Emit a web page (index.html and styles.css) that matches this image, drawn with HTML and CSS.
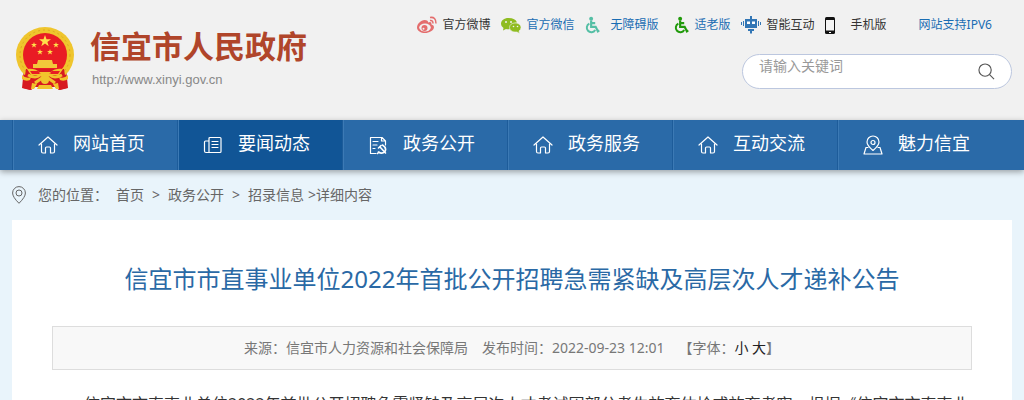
FILE: index.html
```html
<!DOCTYPE html>
<html lang="zh-CN">
<head>
    <meta charset="UTF-8">
    <meta name="viewport" content="width=device-width, initial-scale=1.0">
    <title>信宜市市直事业单位2022年首批公开招聘急需紧缺及高层次人才递补公告</title>
    <link rel="stylesheet" href="styles.css">
</head>
<body>

<svg class="symbols" aria-hidden="true">
    <symbol id="home" viewBox="0 0 20 20">
        <path d="M1 10 10 2l9 8M3.500 9v7.500q0 1.500 1.500 1.500h2.500v-5q0-1 1-1h3q1 0 1 1v5H15q1.500 0 1.500-1.500V9"/>
    </symbol>
    <symbol id="news" viewBox="0 0 20 20">
        <path d="M6 17.500V3.500q0-1 1-1h10q1 0 1 1v13q0 1-1 1H3q-1.500 0-1.500-1.500V7q0-1 1-1H6M9 6.500h6M9 9.500h6M9 12.500h6"/>
    </symbol>
    <symbol id="party" viewBox="0 0 20 20">
        <path d="M8 18.500H2.500v-16H14l3.500 3.500v4M13.500 2.500V6h4M5 6.500h5M5 10h4M5 13.500h2"/>
        <path d="M14.500 10q4.500 3 2.500 6.500-3 3-6.500.5M9.500 18.500l1.500-1.500M10.500 13l2.500-2.500M12 12l5.500 6" stroke-width="1.600"/>
    </symbol>
    <symbol id="wheelchair" viewBox="0 0 16 20">
        <circle cx="6.500" cy="3" r="2.200" fill="currentColor"/>
        <path d="M6.500 5v7h5l2.500 5 1.500-1M6.500 8h4.500" fill="none" stroke="currentColor" stroke-width="2.400"/>
        <path d="M4.500 8.500a5 5 0 1 0 6.500 7" fill="none" stroke="currentColor" stroke-width="2.200"/>
    </symbol>
</svg>

<header class="header">
    <div class="wrap header-inner">
        <a class="logo" href="#">
            <svg class="emblem" viewBox="0 0 60 64" aria-hidden="true">
                <path d="M9 42 7 62l8 2 5-3h20l5 3 8-2-2-20z" fill="#d71920"/>
                <ellipse cx="30" cy="29" rx="29" ry="28" fill="#efc52d"/>
                <circle cx="30" cy="29" r="25" fill="none" stroke="#dca820" stroke-dasharray="2 3"/>
                <circle cx="30" cy="29" r="22" fill="#e91c24"/>
                <g fill="#ffe04a">
                    <path d="m30 9 1.500 4.200h4.500l-3.600 2.700 1.300 4.300-3.700-2.600-3.700 2.600 1.300-4.300-3.600-2.700h4.500z"/>
                    <path d="m19 16 .7 2h2.300l-1.800 1.300.7 2.200-1.900-1.300-1.900 1.300.7-2.200-1.800-1.300h2.300zM41 16l.7 2H44l-1.800 1.300.7 2.200-1.900-1.300-1.900 1.300.7-2.200-1.800-1.300h2.300zM25 23l.7 2H28l-1.800 1.300.7 2.200-1.900-1.300-1.900 1.300.7-2.200-1.800-1.300h2.300zM35 23l.7 2H38l-1.800 1.300.7 2.200-1.900-1.300-1.900 1.300.7-2.200-1.800-1.300h2.300z"/>
                </g>
                <path d="M23 34h14l1 4h4v4H18v-4h4z" fill="#f2c93a"/>
                <path d="M11 43h38l3 19-8 2-4-3H20l-4 3-8-2z" fill="#d71920"/>
                <path d="M12 43q8-1 12 3h12q4-4 12-3l-4 6H16z" fill="#f2c32c"/>
                <path d="M15 45h8l3 3h8l3-3h8l-2 3H17z" fill="#e91c24"/>
                <path d="M13 49q8 4 12 0h10q4 4 12 0M20 57l7-5h6l7 5" fill="none" stroke="#f2c32c" stroke-width="3"/>
                <circle cx="30" cy="54" r="4" fill="#efc52d"/>
                <path d="M7 49q4 4 9 2l-1 3q-4 2-8-1zM53 49q-4 4-9 2l1 3q4 2 8-1zM17 57l5 1-3 5h-3zM43 57l-5 1 3 5h3zM24 59h12l2 4H22z" fill="#f2c32c"/>
            </svg>
            <span class="logo-text">
                <strong>信宜市人民政府</strong>
                <span>http://www.xinyi.gov.cn</span>
            </span>
        </a>

        <div class="header-right">
            <nav class="top-links" aria-label="快捷入口">
                <a class="dark" href="#">
                    <svg viewBox="0 0 20 18" aria-hidden="true">
                        <path d="M7.500 4C4 4 0 8 0 11.500S4 17 8 17s9-2.500 9-6q0-2-2.500-2.500Q15 5 11 6.500q.5-2.500-3.500-2.500z" fill="#e46d6d"/>
                        <ellipse cx="8" cy="11.500" rx="5.800" ry="4" fill="#f1f1f1"/>
                        <circle cx="7.500" cy="12" r="3" fill="#e46d6d"/>
                        <circle cx="6.500" cy="12.800" r="1" fill="#f1f1f1"/>
                        <path d="M13 1.500q6-1 6 6M13 4.500q3-.5 3 3" fill="none" stroke="#e46d6d" stroke-width="1.500"/>
                    </svg>官方微博</a>
                <a href="#">
                    <svg viewBox="0 0 20 18" aria-hidden="true">
                        <path d="M7.500 2C3 2 0 4.500 0 8q0 2.500 2.500 4L2 14.500 5 13q2 .5 4 0-1-6 7-6.500Q14.500 2 7.500 2z" fill="#8fbc21"/>
                        <path d="M14 7c-3.500 0-5.500 2-5.500 4.500S11 16 14 16h2l2.500 1.500-.5-2.500q2-1.500 2-3.500C20 9 17.500 7 14 7z" fill="#8fbc21" stroke="#f1f1f1" stroke-width=".6"/>
                        <g fill="#f1f1f1"><circle cx="5" cy="6" r="1"/><circle cx="10" cy="6" r="1"/><circle cx="12.500" cy="10.500" r=".8"/><circle cx="16.500" cy="10.500" r=".8"/></g>
                    </svg>官方微信</a>
                <a href="#"><svg class="wheelchair teal" viewBox="0 0 20 18"><use href="#wheelchair" width="15" height="18"/></svg>无障碍版</a>
                <a href="#"><svg class="wheelchair green" viewBox="0 0 20 18"><use href="#wheelchair" x="5" width="15" height="18"/></svg>适老版</a>
                <a class="dark" href="#">
                    <svg viewBox="0 0 20 18" aria-hidden="true">
                        <path d="M9 0h2v3h5v9H4V3h5zM0 6h1v3H0zm2-1h1v5H2zm15 0h1v5h-1zm2 1h1v3h-1zM7 13h6v2h-2v2.500H9V15H7z" fill="#3276b5"/>
                        <path d="M6 5.500h3v2.500H6zm5 0h3v2.500h-3z" fill="#fff"/>
                    </svg>智能互动</a>
                <a class="dark" href="#">
                    <svg viewBox="0 0 20 18" aria-hidden="true">
                        <rect x="0" y="1" width="10" height="17" rx="1.500" fill="#111"/>
                        <path d="M1 4h8v10.500H1z" fill="#f4f4f4"/>
                        <path d="M4 16h2v1H4z" fill="#fff"/>
                    </svg>手机版</a>
                <a class="ipv6" href="#">网站支持IPV6</a>
            </nav>
            <form class="search">
                <input type="text" placeholder="请输入关键词" aria-label="请输入关键词">
                <button type="button" aria-label="搜索">
                    <svg viewBox="0 0 18 18"><circle cx="7.500" cy="7.500" r="6.500"/><path d="m12 12 5 5"/></svg>
                </button>
            </form>
        </div>
    </div>
</header>

<nav class="main-nav" aria-label="主导航">
    <div class="wrap nav-list">
        <a href="#"><svg><use href="#home"/></svg>网站首页</a>
        <a class="active" href="#"><svg><use href="#news"/></svg>要闻动态</a>
        <a href="#"><svg><use href="#party"/></svg>政务公开</a>
        <a href="#"><svg><use href="#home"/></svg>政务服务</a>
        <a href="#"><svg><use href="#home"/></svg>互动交流</a>
        <a href="#"><svg viewBox="0 0 20 20"><path d="M10 15.500Q4 10.500 4 7a6 6 0 0 1 12 0q0 3.500-6 8.500zM5 12.500H3L1 19h18l-2-6.500h-2"/><circle cx="10" cy="7.500" r="2"/></svg>魅力信宜</a>
    </div>
</nav>

<div class="wrap crumbs">
    <svg viewBox="0 0 14 18" aria-hidden="true"><path d="M7 17.300Q.6 11 .6 7a6.400 6.400 0 0 1 12.800 0q0 4-6.400 10.300z"/><circle cx="7" cy="7" r="3"/></svg>
    <span>您的位置：</span>
    <a href="#">首页</a>
    <span>&gt;</span>
    <a href="#">政务公开</a>
    <span>&gt;</span>
    <a href="#">招录信息</a>
    <span class="current">&gt;详细内容</span>
</div>

<main class="wrap article">
    <h1>信宜市市直事业单位2022年首批公开招聘急需紧缺及高层次人才递补公告</h1>
    <div class="info">
        <span>来源：信宜市人力资源和社会保障局</span>
        <span>发布时间：2022-09-23 12:01</span>
        <span>【字体：<button type="button">小</button> <button type="button">大</button>】</span>
    </div>
    <p>信宜市市直事业单位2022年首批公开招聘急需紧缺及高层次人才考试因部分考生放弃体检或放弃考察，根据《信宜市市直事业</p>
</main>

</body>
</html>
```
FILE: styles.css
```css
* {
    box-sizing: border-box;
}
html {
    overflow-x: hidden;
}
body {
    margin: 0;
    font-family: "Noto Sans", "Noto Sans CJK SC", sans-serif;
    font-size: 14px;
    line-height: 20px;
    color: #333;
    background-color: #e9f4fb;
}
a {
    color: inherit;
    text-decoration: none;
}
button {
    padding: 0;
    border: 0;
    background: none;
    font: inherit;
    color: #222;
    cursor: pointer;
}
.symbols {
    display: none;
}
.wrap {
    width: calc(100% - 24px);
    max-width: 1000px;
    margin: 0 auto;
}

/* header */
.header {
    background-color: #f1f1f1;
}
.header-inner {
    display: flex;
    justify-content: space-between;
    min-height: 120px;
}
.logo {
    display: flex;
    align-items: flex-start;
    gap: 15px;
    padding: 26px 0 0 3px;
}
.emblem {
    width: 60px;
    height: 64px;
}
.logo-text {
    display: flex;
    flex-direction: column;
    gap: 4px;
}
.logo-text strong {
    font-size: 31px;
    font-weight: 700;
    line-height: 40px;
    color: #b0452a;
}
.logo-text span {
    padding-left: 2px;
    font-family: "Liberation Sans", sans-serif;
    font-size: 13px;
    line-height: 20px;
    color: #888;
}
.header-right {
    display: flex;
    flex-direction: column;
    align-items: flex-end;
    gap: 19px;
    padding-top: 15px;
}
.top-links {
    display: flex;
    align-items: center;
    gap: 10px;
    padding-right: 20px;
    font-size: 12px;
    color: #1a6db3;
    white-space: nowrap;
}
.top-links a {
    display: flex;
    align-items: center;
    gap: 6px;
}
.top-links .dark {
    color: #333;
}
.top-links .ipv6 {
    margin-left: 22px;
}
.top-links svg {
    width: 20px;
    height: 18px;
}
.teal {
    color: #55bfa5;
}
.green {
    color: #219a0b;
}
.search {
    display: flex;
    width: 270px;
    height: 35px;
    border: 1px solid #bcc7df;
    border-radius: 18px;
    background-color: #fff;
}
.search input {
    flex: 1;
    min-width: 0;
    padding: 0 0 12px 16px;
    border: 0;
    outline: 0;
    background: none;
    font: inherit;
}
.search input::placeholder {
    color: #999;
    opacity: 1;
}
.search button {
    display: flex;
    align-items: center;
    padding: 0 16px;
}
.search svg {
    width: 17px;
    height: 17px;
    fill: none;
    stroke: #555;
    stroke-width: 1.2;
}

/* navigation */
.main-nav {
    position: relative;
    background-color: #2a6aa8;
    box-shadow: 0 2px 6px rgba(0, 0, 0, 0.35);
}
.nav-list {
    display: flex;
}
.nav-list a {
    display: flex;
    align-items: center;
    gap: 15px;
    width: 16.5%;
    height: 50px;
    padding: 0 0 4px 25px;
    border-left: 1px solid #1d5c9a;
    box-shadow: inset 1px 0 #3c7ab5;
    font-size: 18px;
    color: #fff;
    white-space: nowrap;
}
.nav-list .active {
    background-color: #115596;
}
.nav-list svg {
    width: 20px;
    height: 20px;
    margin-top: 4px;
    fill: none;
    stroke: #fff;
    stroke-width: 1.2;
    stroke-linejoin: round;
    stroke-linecap: round;
}

/* breadcrumb */
.crumbs {
    display: flex;
    align-items: center;
    gap: 8px;
    padding: 15px 0;
    color: #666;
}
.crumbs svg {
    width: 14px;
    height: 18px;
    margin-right: 4px;
    fill: none;
    stroke: #666;
}
.current {
    margin-left: -4px;
}

/* article */
.article {
    padding: 40px;
    background-color: #fff;
}
.article h1 {
    margin: 0 0 28px;
    font-size: 24px;
    font-weight: 400;
    line-height: 38px;
    text-align: center;
    color: #2a69a5;
}
.info {
    display: flex;
    justify-content: center;
    gap: 14px;
    padding: 11px;
    border: 1px solid #ddd;
    background-color: #f8f8f8;
    color: #777;
}
.article p {
    margin: 18px 0;
    font-size: 16px;
    line-height: 32px;
    text-indent: 2em;
}
```
